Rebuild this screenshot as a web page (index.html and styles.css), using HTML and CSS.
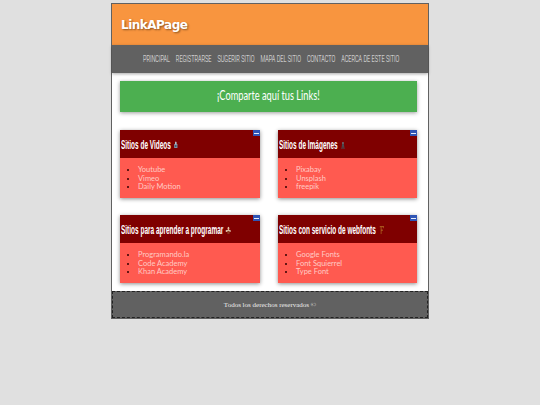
FILE: index.html
```html
<!DOCTYPE html>
<html lang="es">
<head>
<meta charset="utf-8">
<title>LinkAPage</title>
<link rel="stylesheet" href="styles.css">
</head>
<body>
<div class="page">
  <header class="top"><h1>LinkAPage</h1></header>
  <nav class="menu">
    <div class="menu-row"><a>PRINCIPAL</a><a>REGISTRARSE</a><a>SUGERIR SITIO</a><a>MAPA DEL SITIO</a><a>CONTACTO</a><a>ACERCA DE ESTE SITIO</a></div>
  </nav>
  <main class="content">
    <div class="banner"><span class="banner-text">¡Comparte aquí tus Links!</span></div>
    <div class="grid">
      <section class="card">
        <div class="card-head">
          <span class="min"></span>
          <div class="title-row">
            <h2>Sitios de Videos</h2>
            <svg class="ico" viewBox="0 0 8 8"><rect x="1" y="3" width="6" height="4" fill="#7d93a8"/><circle cx="4" cy="2" r="1.600" fill="#b9c6d2"/><rect x="3" y="4" width="2" height="2" fill="#33475c"/></svg>
          </div>
        </div>
        <ul><li>Youtube</li><li>Vimeo</li><li>Daily Motion</li></ul>
      </section>
      <section class="card">
        <div class="card-head">
          <span class="min"></span>
          <div class="title-row">
            <h2>Sitios de Imágenes</h2>
            <svg class="ico" viewBox="0 0 8 8"><path d="M1 8 3 1h2l2 7H5L4 5 3 8z" fill="#4a4a50"/><circle cx="4" cy="2" r="1" fill="#8d8d90"/></svg>
          </div>
        </div>
        <ul><li>Pixabay</li><li>Unsplash</li><li>freepik</li></ul>
      </section>
      <section class="card">
        <div class="card-head">
          <span class="min"></span>
          <div class="title-row">
            <h2>Sitios para aprender a programar</h2>
            <svg class="ico" viewBox="0 0 9 8"><rect x="0" y="4" width="9" height="2" fill="#d9b9a0"/><circle cx="5" cy="2.400" r="1.700" fill="#e8c0a0"/><rect x="3" y="5" width="4" height="3" fill="#8a3a20"/></svg>
          </div>
        </div>
        <ul><li>Programando.la</li><li>Code Academy</li><li>Khan Academy</li></ul>
      </section>
      <section class="card">
        <div class="card-head">
          <span class="min"></span>
          <div class="title-row">
            <h2>Sitios con servicio de webfonts</h2>
            <svg class="ico wide" viewBox="0 0 9 9"><path d="M1 1h7v2H7L6.600 2H4v2h2v1.500H4V8H2.500V2H1z" fill="#a8551c"/></svg>
          </div>
        </div>
        <ul><li>Google Fonts</li><li>Font Squierrel</li><li>Type Font</li></ul>
      </section>
    </div>
  </main>
  <footer class="foot">Todos los derechos reservados ©</footer>
</div>
</body>
</html>
```
FILE: styles.css
```css
* { box-sizing: border-box; }
html, body { margin: 0; padding: 0; }
body { background: #e0e0e0; height: 405px; overflow: hidden; padding-top: 3px; }
.page {
  width: 318px;
  margin: 0 auto;
  border: 1px solid #616161;
  background: #fff;
}
.top {
  height: 41px;
  background: #f8953f;
  display: flex;
  align-items: center;
  padding-left: 9px;
}
.top h1 {
  margin: 0;
  font: 700 12px/1 "DejaVu Sans", sans-serif;
  letter-spacing: -.5px;
  color: #fff;
  text-shadow: 1px 1px 2px rgba(0,0,0,.45);
}
.menu {
  height: 28px;
  background: #616161;
  box-shadow: 0 1px 3px rgba(0,0,0,.35);
  display: flex;
  justify-content: center;
  align-items: center;
  color: #eee;
}
.menu-row {
  flex: none;
  display: flex;
  gap: 9px;
  white-space: nowrap;
  font: 300 8.500px/1 "Roboto", sans-serif;
  transform: scaleX(.655);
  padding-left: 3px;
}
.content { padding: 8px 11px 8px 8px; }
.banner {
  height: 31px;
  background: #4caf50;
  color: #fff;
  box-shadow: 0 1px 4px rgba(0,0,0,.4);
  display: flex;
  align-items: center;
  justify-content: center;
}
.banner-text {
  flex: none;
  white-space: nowrap;
  font: 400 12.500px/1 "Lato", sans-serif;
  transform: scaleX(.74);
}
.grid {
  display: grid;
  grid-template-columns: 140px 139px;
  column-gap: 18px;
  row-gap: 17px;
  margin-top: 18px;
}
.card {
  height: 68px;
  background: #ff5a50;
  box-shadow: 0 1px 4px rgba(0,0,0,.45);
}
.card-head {
  position: relative;
  height: 28px;
  background: #7f0000;
  display: flex;
  align-items: center;
  padding: 2px 0 0 1px;
}
.title-row {
  flex: none;
  display: flex;
  align-items: center;
  gap: 3px;
  white-space: nowrap;
  transform: scaleX(.54);
  transform-origin: left center;
}
.title-row h2 {
  margin: 0;
  font: 700 12px/1 "Liberation Sans", sans-serif;
  color: #fff;
}
.min {
  position: absolute;
  top: 0;
  right: 0;
  width: 7px;
  height: 6px;
  background: #2f55b5;
}
.min::after {
  content: "";
  position: absolute;
  left: 1px;
  right: 1px;
  top: 3px;
  height: 1px;
  background: #e6ecfa;
}
.ico { width: 13px; height: 8px; }
.ico.wide { width: 17px; height: 10px; }
.card ul {
  margin: 0;
  padding: 8px 0 0 18px;
  font: 400 7.500px/8.500px "Lato", sans-serif;
}
.card li { color: #ffcbc5; }
.card li::marker { color: #300; }
.foot {
  height: 27px;
  background: #616161;
  border: 1px dashed #222;
  display: flex;
  align-items: center;
  justify-content: center;
  padding-top: 1px;
  font: 400 7px/1 "Liberation Serif", serif;
  color: #eee;
}
```
